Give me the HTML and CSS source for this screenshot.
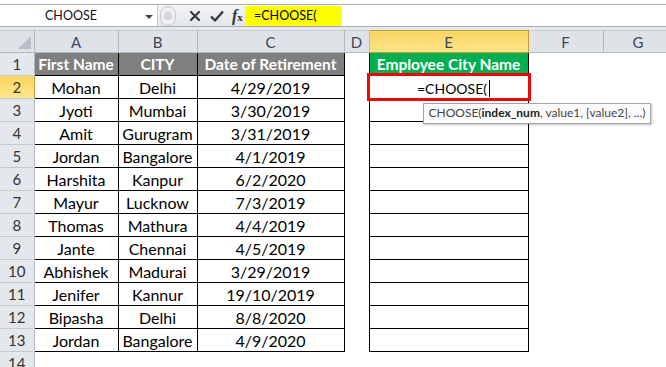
FILE: index.html
```html
<!DOCTYPE html>
<html lang="en">
<head>
    <meta charset="UTF-8" />
    <title>CHOOSE</title>
    <link rel="stylesheet" href="styles.css">
</head>

<body>
    <div class="formula-bar">
        <div class="name-box">
            <span class="name-text">CHOOSE</span>
            <span class="name-arrow"></span>
        </div>
        <div class="bar-buttons">
            <span class="pill"></span>
            <svg class="btn-icon" width="14" height="14" viewBox="0 0 14 14">
                <path d="M3 3 L11 11 M11 3 L3 11" stroke="#3a3a3a" stroke-width="2.2" stroke-linecap="round" />
            </svg>
            <svg class="btn-icon" width="16" height="14" viewBox="0 0 16 14">
                <path d="M2 7.5 L6 11.5 L14 2.5" stroke="#3a3a3a" stroke-width="2.4" fill="none" stroke-linejoin="round" />
            </svg>
            <span class="fx"><i>f</i><small>x</small></span>
        </div>
        <div class="formula-input">
            <span class="formula-hl">=CHOOSE(</span>
        </div>
    </div>

    <div class="sheet">
        <table class="grid">
            <colgroup>
                <col style="width:34px">
                <col style="width:84px">
                <col style="width:79px">
                <col style="width:147px">
                <col style="width:25px">
                <col style="width:159px">
                <col style="width:75px">
                <col style="width:70px">
            </colgroup>
            <tr class="col-heads">
                <th class="corner"><span class="tri"></span></th>
                <th>A</th>
                <th>B</th>
                <th>C</th>
                <th>D</th>
                <th class="sel">E</th>
                <th>F</th>
                <th>G</th>
            </tr>
            <tr>
                <td class="rh">1</td>
                <td class="t head">First Name</td>
                <td class="t head">CITY</td>
                <td class="t head">Date of Retirement</td>
                <td></td>
                <td class="t head green">Employee City Name</td>
                <td></td><td></td>
            </tr>
            <tr>
                <td class="rh sel">2</td>
                <td class="t">Mohan</td>
                <td class="t">Delhi</td>
                <td class="t">4/29/2019</td>
                <td></td>
                <td class="t active"><span class="edit">=CHOOSE(<span class="caret"></span></span>
                    <div class="tip">CHOOSE(<b>index_num</b>, value1, [value2], ...)</div>
                </td>
                <td></td><td></td>
            </tr>
            <tr>
                <td class="rh">3</td>
                <td class="t">Jyoti</td>
                <td class="t">Mumbai</td>
                <td class="t">3/30/2019</td>
                <td></td><td class="t"></td><td></td><td></td>
            </tr>
            <tr>
                <td class="rh">4</td>
                <td class="t">Amit</td>
                <td class="t">Gurugram</td>
                <td class="t">3/31/2019</td>
                <td></td><td class="t"></td><td></td><td></td>
            </tr>
            <tr>
                <td class="rh">5</td>
                <td class="t">Jordan</td>
                <td class="t">Bangalore</td>
                <td class="t">4/1/2019</td>
                <td></td><td class="t"></td><td></td><td></td>
            </tr>
            <tr>
                <td class="rh">6</td>
                <td class="t">Harshita</td>
                <td class="t">Kanpur</td>
                <td class="t">6/2/2020</td>
                <td></td><td class="t"></td><td></td><td></td>
            </tr>
            <tr>
                <td class="rh">7</td>
                <td class="t">Mayur</td>
                <td class="t">Lucknow</td>
                <td class="t">7/3/2019</td>
                <td></td><td class="t"></td><td></td><td></td>
            </tr>
            <tr>
                <td class="rh">8</td>
                <td class="t">Thomas</td>
                <td class="t">Mathura</td>
                <td class="t">4/4/2019</td>
                <td></td><td class="t"></td><td></td><td></td>
            </tr>
            <tr>
                <td class="rh">9</td>
                <td class="t">Jante</td>
                <td class="t">Chennai</td>
                <td class="t">4/5/2019</td>
                <td></td><td class="t"></td><td></td><td></td>
            </tr>
            <tr>
                <td class="rh">10</td>
                <td class="t">Abhishek</td>
                <td class="t">Madurai</td>
                <td class="t">3/29/2019</td>
                <td></td><td class="t"></td><td></td><td></td>
            </tr>
            <tr>
                <td class="rh">11</td>
                <td class="t">Jenifer</td>
                <td class="t">Kannur</td>
                <td class="t">19/10/2019</td>
                <td></td><td class="t"></td><td></td><td></td>
            </tr>
            <tr>
                <td class="rh">12</td>
                <td class="t">Bipasha</td>
                <td class="t">Delhi</td>
                <td class="t">8/8/2020</td>
                <td></td><td class="t"></td><td></td><td></td>
            </tr>
            <tr>
                <td class="rh">13</td>
                <td class="t">Jordan</td>
                <td class="t">Bangalore</td>
                <td class="t">4/9/2020</td>
                <td></td><td class="t"></td><td></td><td></td>
            </tr>
            <tr>
                <td class="rh">14</td>
                <td></td><td></td><td></td><td></td><td></td><td></td><td></td>
            </tr>
        </table>
    </div>
</body>
</html>
```

FILE: styles.css
```css
body {
    margin: 0;
    font-family: Lato, 'Liberation Sans', sans-serif;
    background-color: #fff;
    width: 666px;
    height: 367px;
    overflow: hidden;
}

/* --- formula bar --- */
.formula-bar {
    display: flex;
    height: 21px;
    margin-top: 4px;
    border-top: 1px solid #a8acb3;
    border-bottom: 1px solid #a8acb3;
    background-color: #fff;
}

.formula-bar + .sheet {
    border-top: 3px solid #e6e8ec;
}

.name-box {
    width: 157px;
    display: flex;
    align-items: center;
    justify-content: space-between;
    padding: 0 0 0 45px;
    box-sizing: border-box;
    font-size: 12.5px;
    color: #111;
}

.name-arrow {
    width: 0;
    height: 0;
    border-left: 4px solid transparent;
    border-right: 4px solid transparent;
    border-top: 4px solid #444;
    margin-right: 4px;
    margin-top: 2px;
}

.bar-buttons {
    width: 88px;
    display: flex;
    align-items: center;
    gap: 7px;
    background: linear-gradient(#f4f5f7, #e3e6ea);
    border-left: 1px solid #c9ccd1;
    padding-left: 2px;
    box-sizing: border-box;
}

.pill {
    width: 14px;
    height: 18px;
    border-radius: 8px;
    background: radial-gradient(circle at 50% 50%, #d6d8dc 0 4px, #eef0f2 5px);
    border: 1px solid #c4c7cc;
    margin-right: 5px;
}

.fx {
    font-family: 'Liberation Serif', serif;
    font-size: 16px;
    color: #333;
    font-weight: bold;
}

.fx small {
    font-size: 11px;
}

.formula-input {
    flex: 1;
    display: flex;
    align-items: center;
}

.formula-hl {
    background-color: #ffff00;
    width: 97px;
    height: 20px;
    line-height: 20px;
    padding-left: 9px;
    box-sizing: border-box;
    font-size: 12.5px;
    color: #000;
}

/* --- sheet --- */
.grid {
    border-collapse: collapse;
    table-layout: fixed;
    width: 673px;
    font-size: 16px;
}

.grid td,
.grid th {
    padding: 0;
    height: 22px;
    text-align: center;
    white-space: nowrap;
    overflow: visible;
}

.col-heads th {
    height: 21px;
    background: #dfe3e8;
    border-right: 1px solid #b3b9c2;
    border-bottom: 1px solid #b3b9c2;
    border-top: 1px solid #c9cdd3;
    font-weight: normal;
    color: #3c4757;
    font-size: 15px;
}

.col-heads th.sel {
    background: linear-gradient(#f8d460, #ffe78d);
    border-color: #c3993a;
    color: #3c4757;
}

.corner {
    position: relative;
}

.tri {
    position: absolute;
    right: 3px;
    bottom: 3px;
    width: 0;
    height: 0;
    border-left: 13px solid transparent;
    border-bottom: 13px solid #b9bec6;
}

.rh {
    background: #e4e7eb;
    border-right: 1px solid #b3b9c2;
    border-bottom: 1px solid #c4c9d0;
    color: #333;
    font-size: 15px;
}

.rh.sel {
    background: linear-gradient(#f8d460, #ffe78d);
    border-right-color: #c3993a;
}

.t {
    border: 1px solid #000;
    color: #000;
}

.t.head {
    background-color: #7f7f7f;
    color: #fff;
    font-weight: bold;
    font-size: 15.5px;
}

.t.green {
    background-color: #00b050;
}

/* --- active cell --- */
.active {
    position: relative;
}

.active::after {
    content: '';
    position: absolute;
    left: -3px;
    top: -3px;
    right: -3px;
    bottom: -3px;
    border: 3px solid #ea0a0a;
}

.edit {
    position: relative;
    left: 5px;
    font-size: 14px;
}

.caret {
    display: inline-block;
    width: 1px;
    height: 17px;
    background: #000;
    vertical-align: -3px;
    margin-left: 2px;
}

.tip {
    position: absolute;
    left: 53px;
    top: 27px;
    z-index: 5;
    background-color: #fbfbfb;
    border: 1px solid #a5a5a5;
    box-shadow: 1px 1px 2px rgba(0, 0, 0, 0.25);
    padding: 1px 5px 2px;
    font-size: 12px;
    color: #454545;
    line-height: 16px;
}

.tip b {
    color: #222;
}
```
